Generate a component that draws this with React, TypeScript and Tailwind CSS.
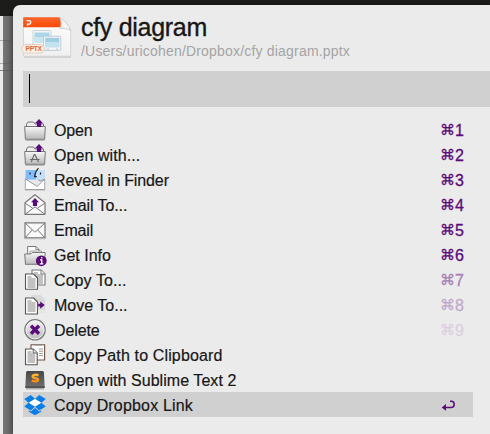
import React from "react";

const PURPLE = "#5b0a7b";

function Defs() {
  return (
    <svg className="absolute h-0 w-0" aria-hidden="true">
      <defs>
        <linearGradient id="metal" x1="0" y1="0" x2="0" y2="1">
          <stop offset="0" stopColor="#f7f7f7" />
          <stop offset="1" stopColor="#b9b9b9" />
        </linearGradient>
        <linearGradient id="orange" x1="0" y1="0" x2="0" y2="1">
          <stop offset="0" stopColor="#f9652c" />
          <stop offset="1" stopColor="#fb4a08" />
        </linearGradient>
        <linearGradient id="paper" x1="0" y1="0" x2="0" y2="1">
          <stop offset="0" stopColor="#ffffff" />
          <stop offset="1" stopColor="#f0f0f1" />
        </linearGradient>
        <linearGradient id="dark" x1="0" y1="0" x2="0" y2="1">
          <stop offset="0" stopColor="#484848" />
          <stop offset="1" stopColor="#727272" />
        </linearGradient>
        <linearGradient id="sublime" x1="0" y1="0" x2="0" y2="1">
          <stop offset="0" stopColor="#ffb432" />
          <stop offset="1" stopColor="#f68a12" />
        </linearGradient>
      </defs>
    </svg>
  );
}

function Icon({ children }: { children: React.ReactNode }) {
  return (
    <svg className="h-[25px] w-6 shrink-0" viewBox="0 -1 24 25" fill="none">
      {children}
    </svg>
  );
}

function FolderBase() {
  return (
    <>
      <path d="M3.5 8V6l1.5-2h5.5l1.5 2h8.5v2" fill="#ededed" stroke="#777" />
      <path d="M1.7 8.5h20.6l-.7 12.8H2.4z" fill="url(#metal)" stroke="#777" strokeLinejoin="round" />
      <path d="M2.5 22.4h19" stroke="#aaa" strokeWidth=".8" />
    </>
  );
}

function UpArrow({ x, y }: { x: number; y: number }) {
  return <path transform={`translate(${x} ${y})`} d="M0-4 4 .2H2.1V4h-4.2V.2H-4z" fill={PURPLE} />;
}

function Page({ x, y, w, h, stroke, fold }: { x: number; y: number; w: number; h: number; stroke: string; fold?: boolean }) {
  const f = 4;
  const lines = [];
  for (let i = 5; i < h - 1.5; i += 2) lines.push(i);
  return (
    <g transform={`translate(${x} ${y})`}>
      <path d={`M0 0H${w - f}L${w} ${f}V${h}H0z`} fill="#fff" stroke={stroke} strokeWidth="1.1" strokeLinejoin="round" />
      {fold && <path d={`M${w - f} 0V${f}H${w}`} fill="#eee" stroke={stroke} strokeWidth=".9" />}
      <path d="M2 3H6" stroke="#777" strokeWidth=".9" />
      {lines.map((i) => (
        <path key={i} d={`M2 ${i}H${w - 2}`} stroke="#777" strokeWidth=".9" />
      ))}
    </g>
  );
}

const icons: Record<string, React.ReactNode> = {
  open: (
    <>
      <FolderBase />
      <UpArrow x={16} y={5} />
    </>
  ),
  openWith: (
    <>
      <FolderBase />
      <UpArrow x={16} y={5} />
      <path d="M8.3 19 11.2 11.5h.7L15.5 19M7 16.5h9.5" stroke="#666" strokeWidth="1.1" />
    </>
  ),
  finder: (
    <>
      <path d="M2.5 2h10.7v12H2.5z" fill="#82bdfb" />
      <path d="M13.2 2H22v12h-8.8z" fill="#c3dffa" />
      <path d="M15.5.3C12.5 3 12 6 11.6 8.7h2.2" stroke="#222" strokeWidth="1.2" />
      <path d="M7 4.4v2M17.5 4.4v2" stroke="#222" strokeWidth="1.2" />
      <path d="M2.3 10.7 12.5 17l9.2-6v10.5H2.3z" fill="#fff" stroke="#888" strokeWidth=".7" />
      <path d="M3 11.4 14.2 18.4 21.2 11.5l-4 1.5-2.3-1.3" fill="#e9e9e9" stroke="#888" strokeWidth=".8" />
      <path d="M2 21.8h20" stroke="#999" />
    </>
  ),
  emailTo: (
    <>
      <path d="M2 9.8 12 1.8l10 8v11.5H2z" fill="#fafafa" stroke="#777" strokeWidth="1.2" strokeLinejoin="round" />
      <path d="m2.5 10.5 7 4.5m12-4.5-7 4.5M2.5 21 12 13.8l9.5 7.2" stroke="#777" />
      <UpArrow x={12} y={9} />
    </>
  ),
  email: (
    <>
      <path d="M2 4.8h20v15H2z" fill="#fafafa" stroke="#777" strokeWidth="1.2" />
      <path d="m2.3 5.2 8.5 8c.8.8 1.6.8 2.4 0l8.5-8M2.4 19.5 9.2 12M21.6 19.5 14.8 12" stroke="#777" />
      <path d="M2 20.8h20" stroke="#bbb" strokeWidth=".7" />
    </>
  ),
  info: (
    <>
      <path d="M4.7 11V3.5H13l3 3V11" fill="#fff" stroke="#777" />
      <path d="M12.8 3.5v3H16" stroke="#777" strokeWidth=".8" />
      <path d="M7 8h11.5v3H7z" fill="#fff" stroke="#888" strokeWidth=".8" />
      <path d="M1.7 11h6l1.5-1.5h13l-.7 11.8h-19z" fill="url(#metal)" stroke="#777" />
      <circle cx="18.3" cy="17.8" r="5.4" fill={PURPLE} />
      <path d="M18.7 14.1v1.4M17 16.9h1.8v3.7M16.8 20.8h3.5" stroke="#fff" strokeWidth="1.3" />
    </>
  ),
  copy: (
    <>
      <Page x={9} y={2} w={13} h={15} stroke="#777" fold />
      <Page x={2.5} y={6} w={12} h={15.3} stroke="#555" />
    </>
  ),
  move: (
    <>
      <path d="M7.5 2h10l4.5 4.5V17h-6z" fill="#dadada" />
      <path d="M17 19h6" stroke="#ddd" />
      <Page x={2.5} y={5} w={12} h={16} stroke="#555" />
      <path d="M15.2 10.7h2V8.5L21.7 12l-4.5 3.7v-2.2h-2z" fill={PURPLE} />
    </>
  ),
  delete: (
    <>
      <circle cx="12" cy="11.8" r="10.2" fill="url(#metal)" stroke="#777" strokeWidth="1.2" />
      <circle cx="12" cy="11.8" r="9" stroke="#f4f4f4" strokeWidth=".8" />
      <path d="m8 7.8 8 8m0-8-8 8" stroke={PURPLE} strokeWidth="3.5" />
    </>
  ),
  clipboard: (
    <>
      <path d="M8 1.7h13.6V17H8z" fill="#fff" stroke="#70513d" strokeWidth="1.1" />
      <path d="M11 2.2h8M16 6h4M16 8.2h4M16 10.4h4M16 12.6h4" stroke="#999" />
      <Page x={2.5} y={6} w={11.7} h={15.7} stroke="#555" fold />
    </>
  ),
  sublime: (
    <>
      <path d="M4 3h16l.9 1 .8 15.5-.7 1H3l-.7-1L3.1 4z" fill="url(#dark)" />
      <path d="M2.3 18h19.4v1.2l-1 .8H3.3l-1-.8z" fill="#555" />
      <path d="M3 21h18" stroke="#aaa" />
      <path d="M15.5 7.3c-2.6-.8-5.8-.7-5.8 1.3 0 2.2 5.3 1 5.3 3.1 0 2.1-3.7 2-6.3 1" stroke="url(#sublime)" strokeWidth="2.5" />
    </>
  ),
  dropbox: (
    <>
      <path d="m12 5.8 6.5 3.9-6.5 4-6.5-4z" fill="#fff" />
      <path d="M7.7 2 12 5.8 5.5 9.7 1.3 6zM16.3 2l6.4 4-4.2 3.7L12 5.8zM1.3 13.5l4.2-3.8 6.5 4-4.3 3.7zM18.5 9.7l4.2 3.8-6.4 3.9-4.3-3.7zM5.8 17.4l1.9 1.2 4.3-3.5 4.3 3.5 1.9-1.2v1.3L12 22.2l-6.2-3.5z" fill="#087ee8" />
    </>
  ),
};

function FileIcon() {
  return (
    <svg className="h-[46px] w-[54px] shrink-0" viewBox="20 14 54 46" fill="none">
      <path d="M24 57h47" stroke="#bbb" strokeWidth="1.2" />
      <path d="M23.5 17.5h36L70.7 30v26.2H23.5z" fill="url(#paper)" stroke="#ccc" strokeWidth=".7" />
      <path d="M23.2 17.3h36.3c1.3 2 1.8 5.5.9 10H23.2z" fill="url(#orange)" />
      <path d="M59.5 17.3c2.3 3.5 2.2 8 .9 11.3 3-.6 7.7-.1 10.5 2.2C69 25 64 20 59.5 17.3z" fill="#f5f5f5" stroke="#bbb" strokeWidth=".7" />
      <path d="M26.5 20.7h2.3c2.6 0 2.6 3.4 0 3.4h-1.3V26" stroke="#fff" strokeWidth="1.3" />
      <rect x="33" y="30.5" width="18" height="15" rx="1" fill="#f4f6f7" stroke="#bdc9cf" strokeWidth=".8" />
      <path d="M34.5 32.5h15v8.8h-15z" fill="#acd6e8" />
      <path d="M34.5 37h15v6h-15z" fill="#c7e5ef" />
      <rect x="43.5" y="36.2" width="17.3" height="14.2" rx="1" fill="#f4f6f7" stroke="#b4c3ca" strokeWidth=".8" />
      <path d="M45.2 37.8h14v9h-14z" fill="#9fcde2" />
      <path d="M45.2 42h14v5.5h-14z" fill="#c1e2ee" />
      <path d="M47 49h2m7 0h2" stroke="#aaa" strokeWidth=".6" />
      <rect x="21.8" y="44.5" width="22.5" height="8.6" rx="4.2" fill="#fff1e3" stroke="#ddc4b1" strokeWidth=".8" />
      <text x="25.5" y="51.2" fontFamily="Liberation Sans, sans-serif" fontSize="6.7" fontWeight="700" fill="#df6540" textLength="16.5">PPTX</text>
    </svg>
  );
}

const rows = [
  { icon: "open", label: "Open", key: "1", tone: "text-[#5b0a7b]", spacing: "tracking-[-0.2px]" },
  { icon: "openWith", label: "Open with...", key: "2", tone: "text-[#5b0a7b]", spacing: "tracking-[0.07px]" },
  { icon: "finder", label: "Reveal in Finder", key: "3", tone: "text-[#5b0a7b]", spacing: "tracking-[-0.1px]" },
  { icon: "emailTo", label: "Email To...", key: "4", tone: "text-[#5b0a7b]", spacing: "tracking-[-0.1px]" },
  { icon: "email", label: "Email", key: "5", tone: "text-[#5b0a7b]", spacing: "tracking-[-0.2px]" },
  { icon: "info", label: "Get Info", key: "6", tone: "text-[#5b0a7b]", spacing: "tracking-normal" },
  { icon: "copy", label: "Copy To...", key: "7", tone: "text-[#a681b5]", spacing: "tracking-[0.08px]" },
  { icon: "move", label: "Move To...", key: "8", tone: "text-[#c2a9cc]", spacing: "tracking-normal" },
  { icon: "delete", label: "Delete", key: "9", tone: "text-[#ddd0e1]", spacing: "tracking-[-0.1px]" },
  { icon: "clipboard", label: "Copy Path to Clipboard", spacing: "tracking-[0.14px]" },
  { icon: "sublime", label: "Open with Sublime Text 2", spacing: "tracking-[0.05px]" },
  { icon: "dropbox", label: "Copy Dropbox Link", spacing: "tracking-[0.17px]", selected: true },
];

export default function App() {
  return (
    <div className="relative h-[434px] w-[490px] overflow-hidden bg-[#1c1d1a] pt-[5px] font-['Liberation_Sans',Arial,sans-serif] text-[#171717]">
      <Defs />
      <div className="absolute inset-x-0 top-4 bottom-0 flex">
        <div className="w-[3px] bg-[#e9e9e9]" />
        <div className="w-[14px] bg-linear-to-r from-[#777777] to-[#555555]" />
      </div>
      <div className="absolute top-10 left-0 h-6 w-[13px] rounded-r border-y border-r border-[#55555566]" />
      <div className="absolute top-[70px] left-0 h-px w-[13px] bg-[#555555aa]" />
      <main className="relative ml-[13px] h-[429px] rounded-tl-[7px] bg-[#ebebeb] pl-[10px] shadow-[0_0_5px_#0006]">
        <header className="flex h-[66px] pt-[9px]">
          <div className="-ml-[3px]">
            <FileIcon />
          </div>
          <div className="ml-[7px]">
            <h1 className="h-[28px] text-[25px] leading-[27px] tracking-[-0.3px] whitespace-nowrap [-webkit-text-stroke:0.35px_#171717]">cfy diagram</h1>
            <p className="text-[14px] leading-[18px] tracking-[0.19px] whitespace-nowrap text-[#a4a4a4]">/Users/uricohen/Dropbox/cfy diagram.pptx</p>
          </div>
        </header>
        <div className="h-9 bg-[#d0d0d0] pt-[3px] pl-[6px]">
          <div className="h-[29px] w-px bg-black" />
        </div>
        <ul className="mt-[10px] w-[450px]">
          {rows.map((row) => (
            <li key={row.label} className={row.selected ? "flex h-[25px] items-center bg-[#d0d0d0]" : "flex h-[25px] items-center"}>
              <Icon>{icons[row.icon]}</Icon>
              <span className={`ml-[7px] flex-1 pt-[2px] text-[16px] leading-[25px] whitespace-nowrap [-webkit-text-stroke:0.2px_#171717] ${row.spacing}`}>
                {row.label}
              </span>
              {row.key && (
                <span className={`flex w-[32px] items-center pt-[2px] [-webkit-text-stroke:0.3px_currentColor] ${row.tone}`}>
                  <span className="-ml-px w-[15px] font-['DejaVu_Sans',sans-serif] text-[15px] leading-[25px]">⌘</span>
                  <span className="text-[16px] leading-[25px]">{row.key}</span>
                </span>
              )}
              {row.selected && (
                <svg className="mt-[2px] mr-[17px] h-3 w-[15px]" viewBox="0 0 15 12" fill="none">
                  <path d="M9 1.2h1.5c3.6 0 3.6 6.2 0 6.2H3" stroke={PURPLE} strokeWidth="1.5" />
                  <path d="M.7 7.4 5 4.1v6.6z" fill={PURPLE} />
                </svg>
              )}
            </li>
          ))}
        </ul>
      </main>
    </div>
  );
}
